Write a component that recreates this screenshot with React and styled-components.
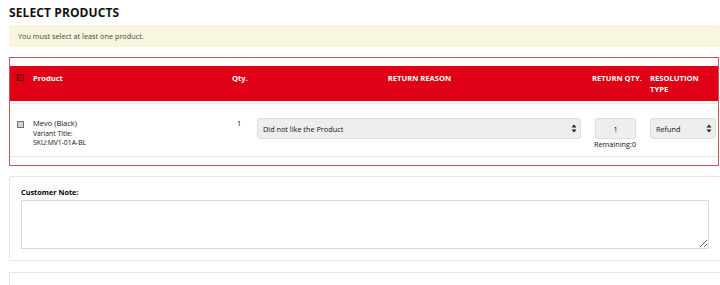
import React from "react";
import styled, { createGlobalStyle } from "styled-components";

const GlobalStyle = createGlobalStyle`
  html, body {
    margin: 0;
    padding: 0;
    background: #fff;
    overflow: hidden;
    font-family: "Open Sans", "Liberation Sans", sans-serif;
  }
`;

const Page = styled.div`
  width: 712px;
  padding: 0 0 0 9px;
  box-sizing: content-box;
`;

const Title = styled.h2`
  margin: 0;
  padding-top: 4px;
  height: 21px;
  font-size: 12px;
  line-height: 17px;
  font-weight: 700;
  color: #111;
  letter-spacing: 0.1px;
`;

const Alert = styled.div`
  height: 22px;
  display: flex;
  align-items: center;
  padding-left: 9px;
  background: #f9f6e0;
  border-radius: 3px;
  font-size: 7.3px;
  color: #4e442f;
`;

const Table = styled.div`
  margin-top: 10px;
  width: 710px;
  border: 1px solid #c9535b;
  box-sizing: border-box;
  padding: 8px 0 8px;
`;

const Row = styled.div`
  display: grid;
  grid-template-columns: 16px 199px 25px 335px 58px 1fr;
  padding-left: 7px;
  background: ${(p) => (p.head ? "#e00016" : "#fff")};
  height: ${(p) => (p.head ? "35px" : "54px")};
  box-sizing: border-box;
  padding-top: ${(p) => (p.head ? "7px" : "14px")};
  margin-top: ${(p) => (p.head ? "0" : "2px")};
  border-top: ${(p) => (p.head ? "none" : "1px solid #ececec")};
  border-bottom: ${(p) => (p.head ? "none" : "1px solid #ececec")};
`;

const HeadCell = styled.div`
  color: #fff;
  font-weight: 700;
  font-size: 7.6px;
  line-height: 11px;
  text-align: ${(p) => p.align || "left"};
  padding-right: ${(p) => (p.align === "center" ? "10px" : "0")};
`;

const Box = styled.span`
  display: block;
  width: 7px;
  height: 7px;
  margin-top: ${(p) => (p.head ? "1px" : "3px")};
  box-sizing: border-box;
  border: 1px solid ${(p) => (p.head ? "#6a0008" : "#6f6f6f")};
  background: ${(p) => (p.head ? "#c40012" : "#d4d4d4")};
`;

const Cell = styled.div`
  font-size: 6.8px;
  line-height: 9.5px;
  color: #111;
`;

const Name = styled.div`
  font-size: 7.5px;
  line-height: 10px;
  margin-bottom: 0.5px;
`;

const Qty = styled.div`
  font-size: 7.5px;
  line-height: 10px;
  padding-left: 5px;
  color: #111;
`;

const Select = styled.div`
  width: ${(p) => p.w}px;
  height: 21px;
  box-sizing: border-box;
  border: 1px solid #ddd;
  border-radius: 3px;
  background: #eee;
  display: flex;
  align-items: center;
  justify-content: space-between;
  padding: 0 3px 0 5px;
  font-size: 7.3px;
  color: #111;
`;

const QtyBox = styled.div`
  width: 41px;
  height: 21px;
  margin-left: 3px;
  box-sizing: border-box;
  border: 1px solid #ddd;
  border-radius: 2px;
  background: #eee;
  display: flex;
  align-items: center;
  justify-content: center;
  font-size: 7.3px;
  color: #111;
`;

const Remaining = styled.div`
  font-size: 7.3px;
  line-height: 10px;
  margin-left: 2px;
  color: #111;
`;

const NoteCard = styled.div`
  margin-top: 10px;
  border: 1px solid #e6e6e6;
  border-radius: 2px;
  padding: 10px 11px 11px 11px;
  height: 85px;
  box-sizing: border-box;
`;

const Label = styled.div`
  font-size: 7.3px;
  font-weight: 700;
  line-height: 11px;
  color: #000;
  margin-bottom: 2px;
`;

const Note = styled.textarea`
  display: block;
  width: 100%;
  height: 49px;
  box-sizing: border-box;
  border: 1px solid #dcdcdc;
  border-radius: 0;
  resize: vertical;
  margin: 0;
  outline: none;
`;

const NextCard = styled.div`
  margin-top: 11px;
  border: 1px solid #e6e6e6;
  height: 40px;
`;

const Arrows = () => (
  <svg width="6" height="9" viewBox="0 0 6 9">
    <path d="M3 0.5L5.5 3.5H0.5Z" fill="#222" />
    <path d="M3 8.5L5.5 5.5H0.5Z" fill="#222" />
  </svg>
);

export default function App() {
  return (
    <Page>
      <GlobalStyle />
      <Title>SELECT PRODUCTS</Title>
      <Alert>You must select at least one product.</Alert>
      <Table>
        <Row head>
          <div>
            <Box head />
          </div>
          <HeadCell>Product</HeadCell>
          <HeadCell>Qty.</HeadCell>
          <HeadCell align="center">RETURN REASON</HeadCell>
          <HeadCell>RETURN QTY.</HeadCell>
          <HeadCell>
            RESOLUTION
            <br />
            TYPE
          </HeadCell>
        </Row>
        <Row>
          <div>
            <Box />
          </div>
          <Cell>
            <Name>Mevo (Black)</Name>
            <div>Variant Title:</div>
            <div>SKU:MV1-01A-BL</div>
          </Cell>
          <Qty>1</Qty>
          <div>
            <Select w={324}>
              Did not like the Product
              <Arrows />
            </Select>
          </div>
          <div>
            <QtyBox>1</QtyBox>
            <Remaining>Remaining:0</Remaining>
          </div>
          <div>
            <Select w={66}>
              Refund
              <Arrows />
            </Select>
          </div>
        </Row>
      </Table>
      <NoteCard>
        <Label>Customer Note:</Label>
        <Note />
      </NoteCard>
      <NextCard />
    </Page>
  );
}
